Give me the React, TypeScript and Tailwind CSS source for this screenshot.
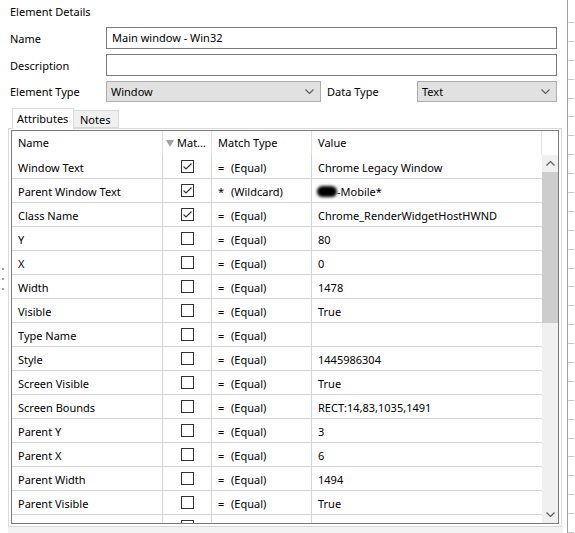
import React from 'react';

type Row = { name: string; checked: boolean; op: string; match: string; value: string; blur?: boolean };

const rows: Row[] = [
  { name: 'Window Text', checked: true, op: '=', match: '(Equal)', value: 'Chrome Legacy Window' },
  { name: 'Parent Window Text', checked: true, op: '*', match: '(Wildcard)', value: '-Mobile*', blur: true },
  { name: 'Class Name', checked: true, op: '=', match: '(Equal)', value: 'Chrome_RenderWidgetHostHWND' },
  { name: 'Y', checked: false, op: '=', match: '(Equal)', value: '80' },
  { name: 'X', checked: false, op: '=', match: '(Equal)', value: '0' },
  { name: 'Width', checked: false, op: '=', match: '(Equal)', value: '1478' },
  { name: 'Visible', checked: false, op: '=', match: '(Equal)', value: 'True' },
  { name: 'Type Name', checked: false, op: '=', match: '(Equal)', value: '' },
  { name: 'Style', checked: false, op: '=', match: '(Equal)', value: '1445986304' },
  { name: 'Screen Visible', checked: false, op: '=', match: '(Equal)', value: 'True' },
  { name: 'Screen Bounds', checked: false, op: '=', match: '(Equal)', value: 'RECT:14,83,1035,1491' },
  { name: 'Parent Y', checked: false, op: '=', match: '(Equal)', value: '3' },
  { name: 'Parent X', checked: false, op: '=', match: '(Equal)', value: '6' },
  { name: 'Parent Width', checked: false, op: '=', match: '(Equal)', value: '1494' },
  { name: 'Parent Visible', checked: false, op: '=', match: '(Equal)', value: 'True' },
  { name: '', checked: false, op: '', match: '', value: '' },
];

function Chevron({ up = false }: { up?: boolean }) {
  return (
    <svg width="9" height="5" viewBox="0 0 9 5" className={up ? 'rotate-180' : ''}>
      <polyline points="0.5,0.5 4.5,4.5 8.5,0.5" fill="none" stroke="#606060" strokeWidth="1.2" />
    </svg>
  );
}

function CheckBox({ checked }: { checked: boolean }) {
  return (
    <div className="w-[13px] h-[13px] border border-[#333333] bg-white flex items-center justify-center">
      {checked && (
        <svg width="11" height="11" viewBox="0 0 11 11">
          <polyline points="1.5,5.5 4,8 9.5,2.5" fill="none" stroke="#333333" strokeWidth="1.2" />
        </svg>
      )}
    </div>
  );
}

export default function App() {
  return (
    <div className="w-[575px] h-[533px] bg-white flex overflow-hidden text-[11px] leading-[16px] text-black font-['Noto_Sans','Liberation_Sans',sans-serif]">
      {/* left splitter grip */}
      <div className="w-[8px] flex flex-col items-start pl-[2px] pt-[268px] gap-[8px]">
        <div className="w-[2px] h-[2px] bg-[#a0a0a0]" />
        <div className="w-[2px] h-[2px] bg-[#a0a0a0]" />
        <div className="w-[2px] h-[2px] bg-[#a0a0a0]" />
      </div>

      <div className="w-[555px] flex flex-col">
        <div className="h-[27px] pl-[2px] pt-[4px]">Element Details</div>

        <div className="flex flex-col gap-[5px]">
          <div className="flex items-center h-[22px]">
            <div className="w-[98px] pl-[2px] pt-[1px]">Name</div>
            <div className="w-[451px] h-[22px] border border-[#7a7a7a] px-[5px] flex items-center">Main window - Win32</div>
          </div>
          <div className="flex items-center h-[22px]">
            <div className="w-[98px] pl-[2px] pt-[1px]">Description</div>
            <div className="w-[451px] h-[22px] border border-[#7a7a7a]" />
          </div>
          <div className="flex items-center h-[21px]">
            <div className="w-[98px] pl-[2px] pt-[1px]">Element Type</div>
            <div className="w-[215px] h-[21px] border border-[#adadad] bg-[#e1e1e1] pl-[4px] pr-[6px] flex items-center justify-between">
              <span>Window</span>
              <Chevron />
            </div>
            <div className="w-[96px] pl-[6px] pt-[1px]">Data Type</div>
            <div className="w-[140px] h-[21px] border border-[#adadad] bg-[#e1e1e1] pl-[4px] pr-[6px] flex items-center justify-between">
              <span>Text</span>
              <Chevron />
            </div>
          </div>
        </div>

        {/* tabs */}
        <div className="flex items-end h-[20px] mt-[7px] pl-[4px] relative z-10 -mb-px">
          <div className="w-[62px] h-[21px] bg-white border border-b-0 border-[#d9d9d9] pl-[4px] flex items-center">Attributes</div>
          <div className="w-[45px] h-[18px] bg-[#f0f0f0] border border-l-0 border-[#d9d9d9] pl-[6px] pt-[1px] flex items-center mb-px">Notes</div>
        </div>

        {/* tab panel */}
        <div className="w-[554px] h-[399px] border border-[#d9d9d9] bg-white pt-[1px] px-[2px]">
          <div className="w-[548px] h-[394px] border border-[#7a7a7a] flex flex-col overflow-hidden">
            <div className="flex h-[24px] shrink-0">
              <div className="w-[151px] border-r border-[#e0e0e0] pl-[6px] flex items-center">Name</div>
              <div className="w-[49px] border-r border-[#e0e0e0] pl-[3px] flex items-center gap-[3px]">
                <svg width="8" height="7" viewBox="0 0 8 7">
                  <polygon points="0,0 8,0 4,7" fill="#a0a0a0" />
                </svg>
                <span>Mat...</span>
              </div>
              <div className="w-[100px] border-r border-[#e0e0e0] pl-[6px] flex items-center">Match Type</div>
              <div className="w-[230px] border-r border-[#e0e0e0] pl-[6px] flex items-center">Value</div>
              <div className="flex-1" />
            </div>

            <div className="flex flex-1 min-h-0">
              <div className="w-[530px] flex flex-col overflow-hidden">
                {rows.map((r, i) => (
                  <div key={i} className="flex h-[24px] shrink-0 border-b border-[#d4d4d4]">
                    <div className="w-[151px] border-r border-[#d4d4d4] pl-[6px] pt-[3px] flex items-center">{r.name}</div>
                    <div className="w-[49px] border-r border-[#d4d4d4] pl-[18px] flex items-center">
                      <CheckBox checked={r.checked} />
                    </div>
                    <div className="w-[100px] border-r border-[#d4d4d4] pl-[6px] pt-[3px] flex items-center">
                      <span className="w-[13px]">{r.op}</span>
                      <span>{r.match}</span>
                    </div>
                    <div className="w-[230px] pl-[6px] pt-[3px] flex items-center">
                      {r.blur && <span className="w-[20px] h-[11px] rounded-full bg-black blur-[1.5px] -ml-[1px] -mt-[2px]" />}
                      <span>{r.value}</span>
                    </div>
                  </div>
                ))}
              </div>

              {/* scrollbar */}
              <div className="w-[16px] bg-[#f0f0f0] flex flex-col">
                <div className="h-[17px] flex items-center justify-center">
                  <Chevron up />
                </div>
                <div className="h-[151px] bg-[#cdcdcd]" />
                <div className="flex-1" />
                <div className="h-[17px] flex items-center justify-center">
                  <Chevron />
                </div>
              </div>
            </div>
          </div>
        </div>
        <div className="flex-1 bg-[#f3f3f3]" />
      </div>

      {/* right edge of neighbouring pane */}
      <div className="flex-1 flex">
        <div className="w-[4px]" />
        <div className="flex-1 border-l border-[#a0a0a0] flex flex-col pt-[22px] gap-[18px]">
          {Array.from({ length: 28 }).map((_, i) => (
            <div key={i} className="h-px w-[6px] bg-[#c8c8c8]" />
          ))}
        </div>
      </div>
    </div>
  );
}
